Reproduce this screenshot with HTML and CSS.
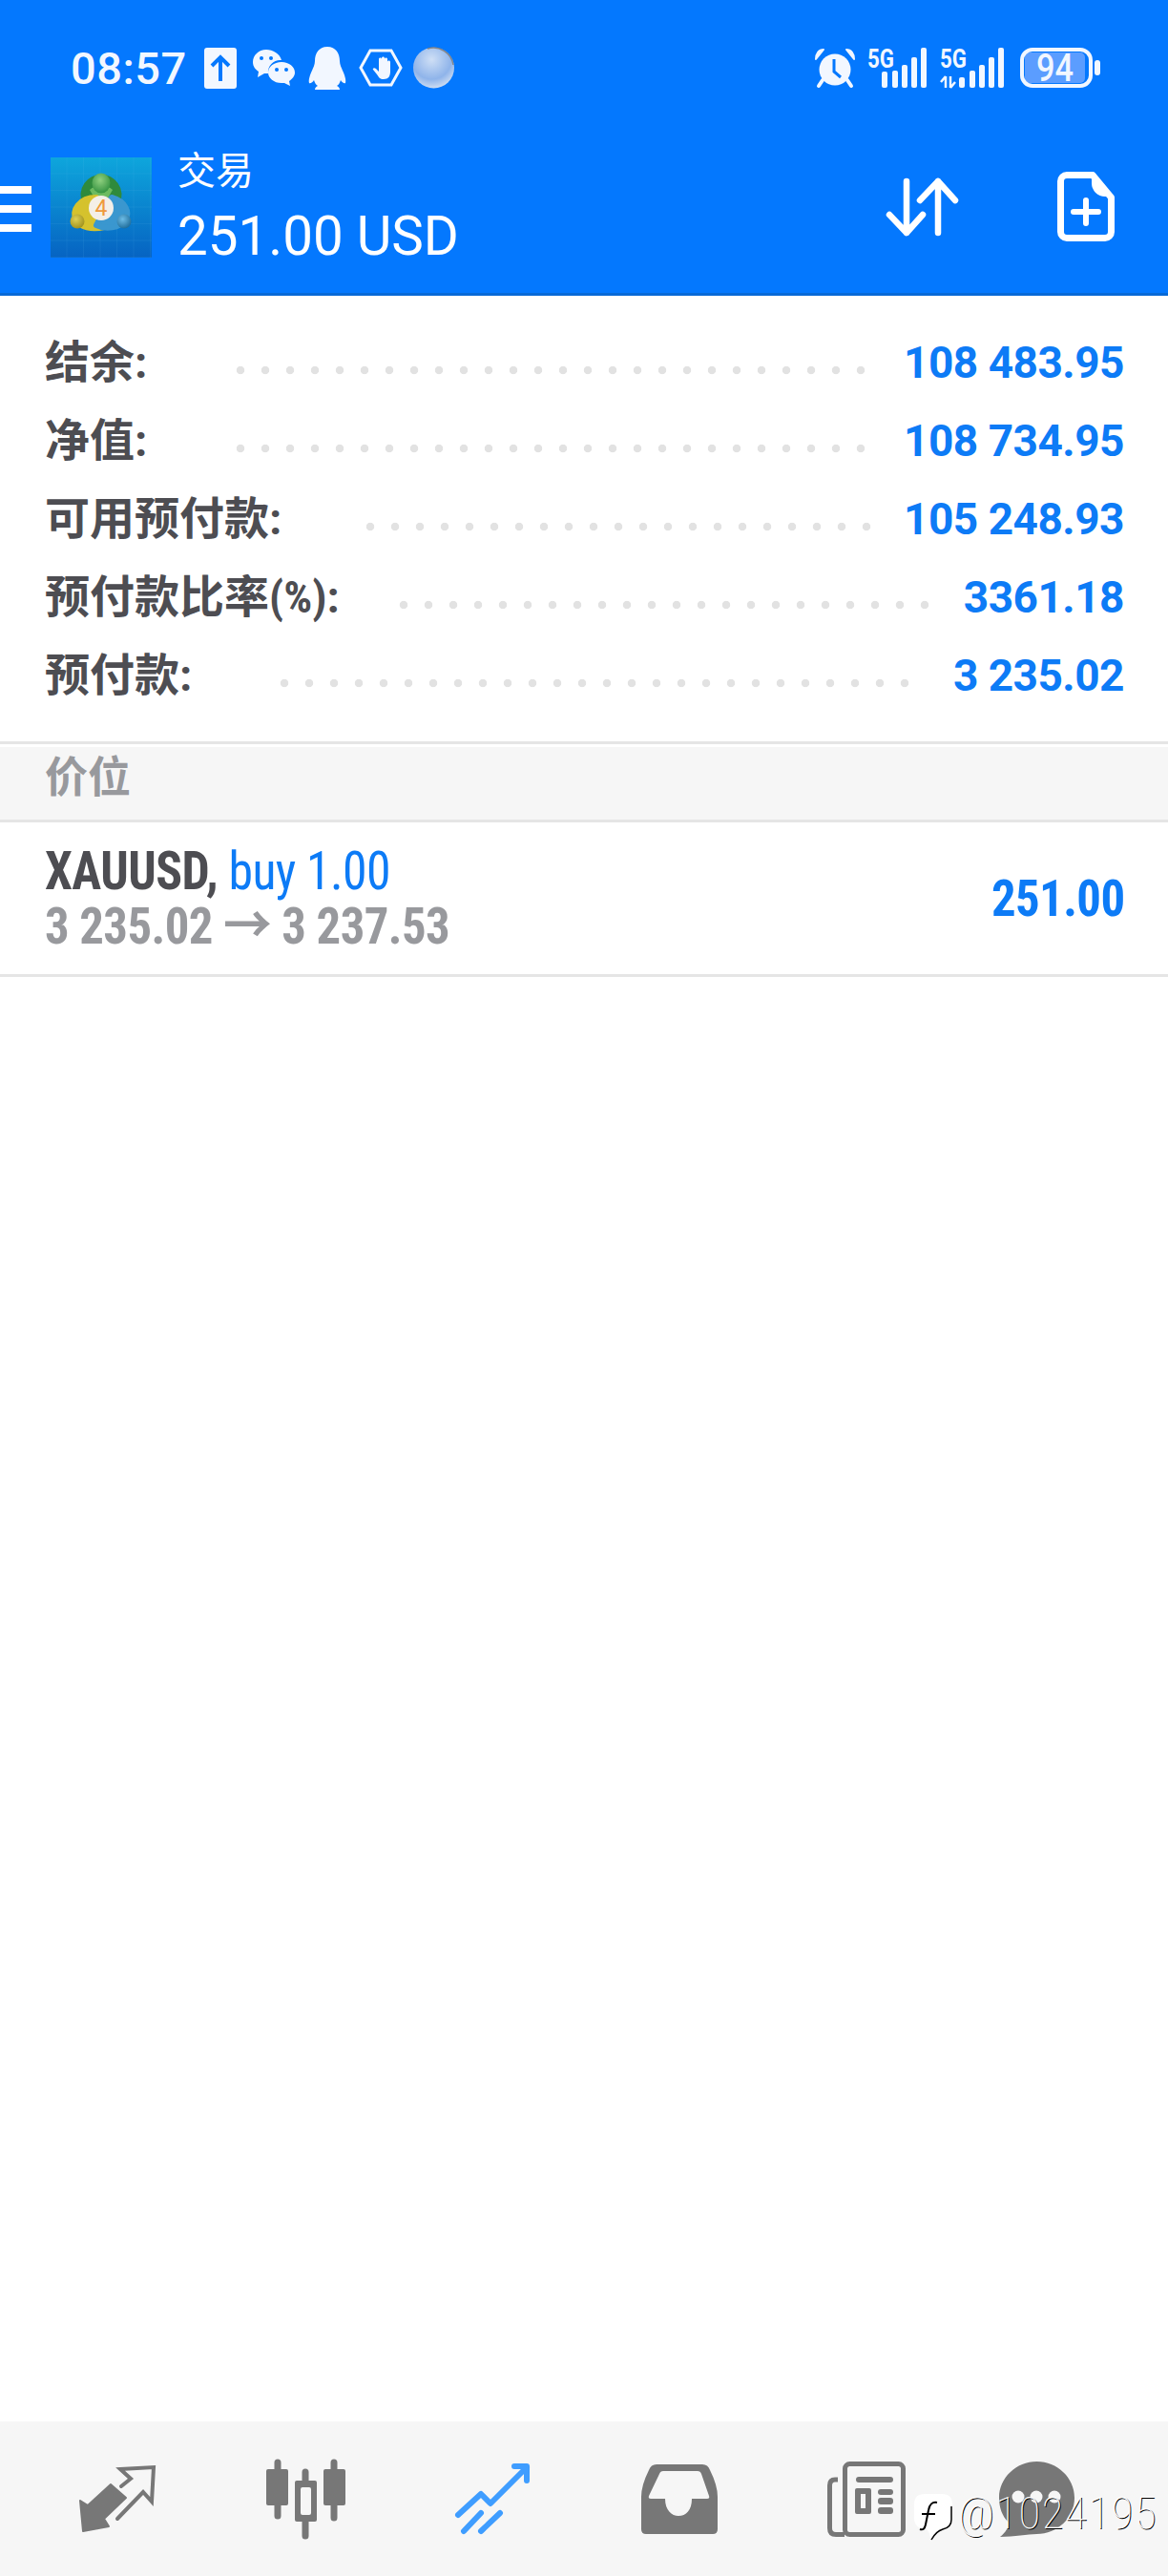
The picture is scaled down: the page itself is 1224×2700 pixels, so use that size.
FILE: index.html
```html
<!DOCTYPE html>
<html lang="zh">
  <head>
    <meta charset="UTF-8" />
    <title>交易</title>
    <link rel="stylesheet" href="styles.css">
  </head>
  <body>
    <header class="app-head">
      <div class="status-bar">
        <span class="clock">08:57</span>
        <svg class="st-upload" width="34" height="43" viewBox="0 0 34 43">
          <rect width="34" height="43" rx="3" fill="#f2f7ff"/>
          <path d="M17 35V11M8 19l9-9 9 9" fill="none" stroke="#0478fe" stroke-width="4"/>
        </svg>
        <svg class="st-wechat" width="44" height="38" viewBox="0 0 44 38">
          <path d="M14 0C6 0 0 6 0 13c0 5 3 8 6 10l-1 6 7-4h4c-1-9 7-15 14-14C28 4 21 0 14 0z" fill="#f2f7ff"/>
          <path d="M30 13c-8 0-14 5-14 11s6 11 14 11h3l6 3-1-5c3-2 6-5 6-9 0-6-6-11-14-11z" fill="#f2f7ff"/>
          <circle cx="9" cy="9" r="2" fill="#0478fe"/><circle cx="19" cy="9" r="2" fill="#0478fe"/>
          <circle cx="25" cy="21" r="2" fill="#0478fe"/><circle cx="35" cy="21" r="2" fill="#0478fe"/>
        </svg>
        <svg class="st-qq" width="40" height="45" viewBox="0 0 40 45">
          <path d="M20 0C11 0 7 7 7 15c0 4-2 7-3 10-2 4-4 10-3 13 1 1 4-1 5-3 1 3 2 5 4 6-2 1-3 2-3 4h26c0-2-1-3-3-4 2-1 3-3 4-6 1 2 4 4 5 3 1-3-1-9-3-13-1-3-3-6-3-10C33 7 29 0 20 0z" fill="#f2f7ff"/>
        </svg>
        <svg class="st-hand" width="46" height="40" viewBox="0 0 46 40">
          <path d="M12 2h22l10 18-10 18H12L2 20z" fill="none" stroke="#f2f7ff" stroke-width="3"/>
          <path d="M15 22l4 5c2 3 3 5 7 5 5 0 7-3 7-8V14c0-2-3-2-3 0v6-9c0-2-3-2-3 0v9-10c0-2-3-2-3 0v10-9c0-2-3-2-3 0v13l-3-3c-2-2-4 0-3 1z" fill="#f2f7ff"/>
        </svg>
        <svg class="st-bubble" width="45" height="44" viewBox="0 0 45 44">
          <defs>
            <radialGradient id="bubbleFill" cx="0.45" cy="0.3" r="0.8">
              <stop offset="0" stop-color="#cfdff5"/>
              <stop offset="0.6" stop-color="#8fb4ea"/>
              <stop offset="1" stop-color="#e8eef5"/>
            </radialGradient>
          </defs>
          <circle cx="22.5" cy="22" r="21.5" fill="url(#bubbleFill)"/>
          <path d="M16 2a21 21 0 0 1 27 17" fill="none" stroke="#7c6f5f" stroke-width="1.5" opacity="0.7"/>
        </svg>
        <span class="status-gap"></span>
        <svg class="st-alarm" width="42" height="41" viewBox="0 0 42 41">
          <circle cx="21" cy="22" r="16.5" fill="#f2f7ff"/>
          <path d="M1 11C1 5 4 1 9 1L1 11zM41 11c0-6-3-10-8-10l8 10z" fill="#f2f7ff" stroke="#f2f7ff" stroke-width="2" stroke-linejoin="round"/>
          <path d="M8 33l-4 6M34 33l4 6" stroke="#f2f7ff" stroke-width="4" stroke-linecap="round"/>
          <path d="M20 11v13l7 6" fill="none" stroke="#0478fe" stroke-width="3"/>
        </svg>
        <svg class="st-signal" width="62" height="42" viewBox="0 0 62 42">
          <text class="net-label" x="0" y="21" textLength="28" lengthAdjust="spacingAndGlyphs">5G</text>
          <rect x="15" y="25" width="6" height="17" rx="2" fill="#f2f7ff"/>
          <rect x="26" y="24" width="6" height="18" rx="2" fill="#f2f7ff"/>
          <rect x="36" y="18" width="6" height="24" rx="2" fill="#f2f7ff"/>
          <rect x="46" y="10" width="6" height="32" rx="2" fill="#f2f7ff"/>
          <rect x="56" y="0" width="6" height="42" rx="2" fill="#f2f7ff"/>
        </svg>
        <svg class="st-signal2" width="67" height="42" viewBox="0 0 67 42">
          <text class="net-label" x="0" y="21" textLength="28" lengthAdjust="spacingAndGlyphs">5G</text>
          <path d="M6 30v12M1 36l5-6M11 30v12M16 36l-5 6" fill="none" stroke="#f2f7ff" stroke-width="2.5"/>
          <rect x="20" y="31" width="6" height="11" rx="2" fill="#f2f7ff"/>
          <rect x="31" y="24" width="6" height="18" rx="2" fill="#f2f7ff"/>
          <rect x="41" y="18" width="6" height="24" rx="2" fill="#f2f7ff"/>
          <rect x="51" y="10" width="6" height="32" rx="2" fill="#f2f7ff"/>
          <rect x="61" y="0" width="6" height="42" rx="2" fill="#f2f7ff"/>
        </svg>
        <svg class="st-battery" width="84" height="42" viewBox="0 0 84 42">
          <rect x="5" y="5" width="63" height="32" rx="5" fill="#5b9dff"/>
          <rect x="2" y="2" width="72" height="38" rx="11" fill="none" stroke="#f2f7ff" stroke-width="4"/>
          <rect x="78" y="13" width="6" height="16" rx="3" fill="#f2f7ff"/>
          <text class="bat-label" x="17" y="35" textLength="39" lengthAdjust="spacingAndGlyphs">94</text>
        </svg>
      </div>
      <div class="toolbar">
        <div class="burger"><i></i><i></i><i></i></div>
        <svg class="mt-logo" width="106" height="105" viewBox="0 0 106 105">
          <defs>
            <linearGradient id="logoBg" x1="0" y1="0" x2="0" y2="1">
              <stop offset="0" stop-color="#0ea6dc"/>
              <stop offset="1" stop-color="#0663c2"/>
            </linearGradient>
            <pattern id="logoGrid" width="17.500" height="17.500" patternUnits="userSpaceOnUse">
              <path d="M17.500 0V17.500H0" fill="none" stroke="#6cc4ee" stroke-width="0.6" opacity="0.3"/>
            </pattern>
            <radialGradient id="headGreen" cx="0.45" cy="0.35" r="0.7">
              <stop offset="0" stop-color="#8fd07f"/>
              <stop offset="1" stop-color="#2f8f3d"/>
            </radialGradient>
            <radialGradient id="headYellow" cx="0.4" cy="0.35" r="0.7">
              <stop offset="0" stop-color="#ded055"/>
              <stop offset="1" stop-color="#9e8f1c"/>
            </radialGradient>
            <radialGradient id="headBlue" cx="0.4" cy="0.35" r="0.7">
              <stop offset="0" stop-color="#6dbce6"/>
              <stop offset="1" stop-color="#1c6a98"/>
            </radialGradient>
          </defs>
          <rect width="106" height="105" fill="url(#logoBg)"/>
          <rect width="106" height="105" fill="url(#logoGrid)"/>
          <path d="M37 50C29 32 42 21 53 21 64 21 77 32 69 50Z" fill="#2f8a3c" stroke="#2f8a3c" stroke-width="6"/>
          <path d="M41 34C47 28 59 28 65 34L58 46H48Z" fill="#6dbb61"/>
          <path d="M48 42C30 42 21 56 27 66 31 73 43 76 56 73Z" fill="#d5c22d" stroke="#d5c22d" stroke-width="6" stroke-linejoin="round"/>
          <path d="M64 42C78 46 84 57 78 66 72 74 58 76 48 71Z" fill="#3a97cf" stroke="#3a97cf" stroke-width="6" stroke-linejoin="round"/>
          <ellipse cx="53" cy="27" rx="9.500" ry="10.500" fill="url(#headGreen)"/>
          <circle cx="28" cy="67" r="7.500" fill="url(#headYellow)"/>
          <circle cx="77" cy="67" r="7.500" fill="url(#headBlue)"/>
          <circle cx="53" cy="53" r="13" fill="#f4efe8"/>
          <text class="logo-four" x="53" y="61" text-anchor="middle">4</text>
        </svg>
        <div class="head-title">
          <div class="head-name">交易</div>
          <div class="head-profit">251.00 USD</div>
        </div>
        <svg class="ic-sort" width="73" height="60" viewBox="0 0 73 60">
          <path d="M21 3v54M3 38l18 19 17-19M54 57V3M35 23L54 3l18 20" fill="none" stroke="#fff" stroke-width="6.500" stroke-linecap="round" stroke-linejoin="round"/>
        </svg>
        <svg class="ic-newdoc" width="60" height="73" viewBox="0 0 60 73">
          <path d="M10 3.500H37L56.500 27V63a6.500 6.500 0 0 1-6.500 6.500H10A6.500 6.500 0 0 1 3.500 63V10A6.500 6.500 0 0 1 10 3.500z" fill="none" stroke="#fff" stroke-width="7" stroke-linejoin="round"/>
          <path d="M36 2v10a14 14 0 0 0 14 14h9z" fill="#fff"/>
          <path d="M30 30v24M17 42h26" stroke="#fff" stroke-width="6" stroke-linecap="round"/>
        </svg>
      </div>
    </header>

    <main class="content">
      <section class="summary">
        <div class="sum-row"><span class="sum-label">结余:</span><span class="dots dots-26"></span><span class="sum-value">108 483.95</span></div>
        <div class="sum-row"><span class="sum-label">净值:</span><span class="dots dots-26"></span><span class="sum-value">108 734.95</span></div>
        <div class="sum-row"><span class="sum-label">可用预付款:</span><span class="dots dots-21"></span><span class="sum-value">105 248.93</span></div>
        <div class="sum-row"><span class="sum-label">预付款比率(%):</span><span class="dots dots-22"></span><span class="sum-value">3361.18</span></div>
        <div class="sum-row"><span class="sum-label">预付款:</span><span class="dots dots-26 dots-last"></span><span class="sum-value">3 235.02</span></div>
      </section>

      <div class="section-head">价位</div>

      <div class="position">
        <div class="pos-left">
          <div class="pos-line"><b class="pos-symbol">XAUUSD,</b> <span class="pos-side">buy 1.00</span></div>
          <div class="pos-prices">3 235.02 → 3 237.53</div>
        </div>
        <div class="pos-profit">251.00</div>
      </div>
    </main>

    <nav class="tabbar">
      <svg width="79" height="72" viewBox="0 0 79 72">
        <path d="M32 21L48 35 25 57 30 65 3 70 0 38 8 43z" fill="#777" stroke="#777" stroke-width="2" stroke-linejoin="round"/>
        <path d="M43 23l10-8-11-10 35-2-2 36-9-10-27 28" fill="none" stroke="#777" stroke-width="4" stroke-linecap="round"/>
      </svg>
      <svg width="83" height="82" viewBox="0 0 83 82">
        <path d="M12 3v56M71 3v58M41 13v67" stroke="#777" stroke-width="7" stroke-linecap="round"/>
        <rect y="10" width="23" height="38" rx="2" fill="#777"/>
        <rect x="60" y="10" width="23" height="38" rx="2" fill="#777"/>
        <rect x="30" y="22" width="23" height="43" rx="2" fill="#777"/>
        <rect x="36" y="29" width="11" height="29" rx="2" fill="#f6f6f6"/>
      </svg>
      <svg width="79" height="74" viewBox="0 0 79 74">
        <path d="M3 54L27 32 37 42 75 4M62 3H75V18M9 71L27 52M27 71L47 52" fill="none" stroke="#3f9dff" stroke-width="6" stroke-linecap="round" stroke-linejoin="round"/>
      </svg>
      <svg width="80" height="73" viewBox="0 0 80 73">
        <path fill="#777" fill-rule="evenodd" d="M16 0H64Q70 0 72 6Q80 22 80 34V68Q80 73 75 73H5Q0 73 0 68V34Q0 22 8 6Q10 0 16 0ZM23 7Q20 7 19 10L8 33Q7 36 10 36H25C25 48 32 54 39 54C47 54 53 48 53 36H69Q72 36 71 33L63 10Q62 7 59 7Z"/>
      </svg>
      <svg width="82" height="79" viewBox="0 0 82 79">
        <rect x="18.500" y="2.500" width="61" height="74" rx="5" fill="none" stroke="#777" stroke-width="5"/>
        <path d="M11 19H8Q2.500 19 2.500 25V70Q2.500 76.500 9 76.500H18" fill="none" stroke="#777" stroke-width="5"/>
        <rect x="30" y="16" width="39" height="6" rx="3" fill="#777"/>
        <path fill="#777" fill-rule="evenodd" d="M31 28H44Q46 28 46 30V53Q46 55 44 55H31Q29 55 29 53V30Q29 28 31 28ZM35 34V49H40V34Z"/>
        <rect x="53" y="29" width="16" height="6" rx="3" fill="#777"/>
        <rect x="53" y="38" width="16" height="7" rx="3" fill="#777"/>
        <rect x="53" y="48" width="16" height="7" rx="3" fill="#777"/>
      </svg>
      <svg class="tab-chat" width="79" height="79" viewBox="0 0 79 79">
        <path d="M39.500 0C61 0 79 17 79 38S61 76 39.500 76C30 76 16 79 1 79 7 74 10 69 10 64 3 57 0 48 0 38 0 17 18 0 39.500 0Z" fill="#777"/>
        <circle cx="20" cy="37" r="6.500" fill="#f6f6f6"/>
        <circle cx="39" cy="37" r="6.500" fill="#f6f6f6"/>
        <circle cx="58" cy="37" r="6.500" fill="#f6f6f6"/>
      </svg>
      <div class="watermark">
        <svg width="42" height="50" viewBox="0 0 42 50">
          <path d="M12 1H30Q41 1 41 12V26Q41 36 31 37 24 38 18 49 18 42 14 38 1 38 1 26V12Q1 1 12 1Z" fill="#fff"/>
          <path d="M25 10C20 9 17 12 16 18L13 33C12 38 10 39 7 38M9 22H23" fill="none" stroke="#000" stroke-width="2"/>
          <path d="M40 14V28Q40 36 31 38 24 40 19 49" fill="none" stroke="#000" stroke-width="1.500"/>
        </svg>
        <span class="wm-text">@1024195</span>
      </div>
    </nav>
  </body>
</html>
```

FILE: styles.css
```css
* {
  box-sizing: border-box;
}
body {
  margin: 0;
  width: 1224px;
  height: 2700px;
  display: flex;
  flex-direction: column;
  background: #fff;
  font-family: Roboto, "Noto Sans CJK SC", sans-serif;
}
svg {
  overflow: visible;
  flex: none;
}
.app-head {
  height: 310px;
  background: #0478fe;
  border-bottom: 3px solid #0869d6;
  color: #fff;
}
.status-bar {
  height: 142px;
  display: flex;
  align-items: center;
  padding-left: 74px;
  color: #f2f7ff;
}
.clock {
  width: 120px;
  font-size: 47px;
  font-weight: 500;
  letter-spacing: 0.5px;
  margin-right: 20px;
  white-space: nowrap;
}
.st-upload {
  margin-right: 17px;
}
.st-wechat {
  margin-right: 14px;
}
.st-qq {
  margin-right: 13px;
}
.st-hand {
  margin-right: 10px;
}
.status-gap {
  width: 377px;
}
.st-alarm {
  margin-right: 13px;
}
.st-signal {
  margin-right: 14px;
}
.st-signal2 {
  margin-right: 17px;
}
.net-label {
  font-size: 27px;
  font-weight: 700;
  fill: #f2f7ff;
}
.bat-label {
  font-size: 40px;
  font-weight: 500;
  fill: #f2f7ff;
}
.toolbar {
  height: 165px;
  display: flex;
  align-items: flex-start;
  padding-top: 23px;
}
.burger {
  width: 33px;
  margin-top: 30px;
  margin-right: 20px;
}
.burger i {
  display: block;
  height: 8px;
  margin-bottom: 12px;
  background: #fff;
}
.logo-four {
  font-size: 23px;
  fill: #ef9a3c;
}
.head-title {
  width: 742px;
  margin-left: 27px;
  margin-top: -20px;
}
.head-name {
  font-size: 40px;
  line-height: 70px;
}
.head-profit {
  font-size: 56.5px;
  line-height: 66px;
}
.ic-sort {
  margin-top: 22px;
  margin-right: 106px;
  margin-left: 1px;
}
.ic-newdoc {
  margin-top: 15px;
}
.content {
  flex: 1;
}
.summary {
  padding: 29px 46px 28px 47px;
  border-bottom: 3px solid #e5e5e5;
  height: 470px;
}
.sum-row {
  height: 82px;
  display: flex;
  align-items: center;
}
.sum-label {
  font-size: 47px;
  font-weight: 700;
  font-stretch: 85%;
  margin-top: -9px;
  color: #4d4d52;
  white-space: nowrap;
}
/* dots sit on a 26px step, right edge hangs off the value */
.dots {
  height: 10px;
  margin-top: 16px;
  margin-left: auto;
  background: radial-gradient(circle at center, #e2e2e2 3.8px, transparent 4.6px) left center / 26px 10px repeat-x;
}
.dots-26 {
  width: 676px;
  margin-right: 32px;
}
.dots-21 {
  width: 546px;
  margin-right: 26px;
}
.dots-22 {
  width: 572px;
  margin-right: 28px;
}
.dots-last {
  margin-right: 38px;
}
.sum-value {
  font-size: 46px;
  font-weight: 700;
  letter-spacing: -0.5px;
  color: #0d7bf6;
  white-space: nowrap;
}
.section-head {
  height: 76px;
  margin-top: 3px;
  padding: 1px 47px 0;
  background: #f6f6f6;
  font-size: 45px;
  font-weight: 700;
  line-height: 64px;
  color: #98999d;
}
.position {
  height: 165px;
  padding: 0 45px 0 47px;
  border-top: 3px solid #e5e5e5;
  border-bottom: 3px solid #e5e5e5;
  display: flex;
  justify-content: space-between;
  align-items: center;
}
.pos-left,
.pos-profit {
  font-stretch: 75%;
  letter-spacing: -0.6px;
  white-space: nowrap;
  transform: scaleX(0.94);
  transform-origin: left center;
}
.pos-profit {
  transform-origin: right center;
  font-size: 54px;
  font-weight: 700;
  color: #0d7bf6;
}
.pos-line {
  font-size: 55px;
  line-height: 57px;
}
.pos-symbol {
  color: #4d4d52;
}
.pos-side {
  color: #0d7bf6;
}
.pos-prices {
  font-size: 54px;
  line-height: 57px;
  font-weight: 700;
  color: #98999d;
}
.tabbar {
  position: relative;
  height: 162px;
  padding-left: 84px;
  background: #f6f6f6;
  display: flex;
  align-items: center;
  gap: 115.5px;
}
.tab-chat {
  margin-left: -18px;
}
.watermark {
  position: absolute;
  left: 957px;
  top: 75px;
  display: flex;
  align-items: flex-start;
}
.wm-text {
  margin-left: 5px;
  font-size: 47px;
  line-height: 42px;
  font-weight: 100;
  font-stretch: 78%;
  letter-spacing: 1.5px;
  color: #fff;
  text-shadow: 1px 1px 0 #000;
}
```
